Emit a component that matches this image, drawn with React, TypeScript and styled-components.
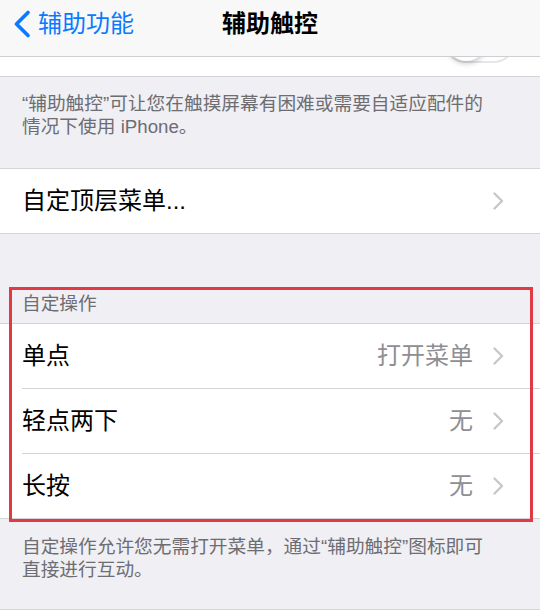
import React from 'react';
import styled, { createGlobalStyle } from 'styled-components';

const GlobalStyle = createGlobalStyle`
  html, body {
    margin: 0;
    padding: 0;
    background: #efeff4;
  }
  body {
    font-family: "Liberation Sans", "Noto Sans CJK SC", sans-serif;
    -webkit-font-smoothing: antialiased;
  }
`;

// Navigation bar
const NavBar = styled.header`
  height: 57px;
  box-sizing: border-box;
  padding-bottom: 9px;
  display: grid;
  grid-template-columns: 1fr auto 1fr;
  align-items: center;
  background: #f8f8f8;
  border-bottom: 1px solid #cfcfd3;
`;

const BackButton = styled.div`
  display: flex;
  align-items: center;
  gap: 7px;
  padding-left: 13px;
  color: #0a7aff;
  font-size: 24px;
  line-height: 30px;
`;

const Title = styled.div`
  font-size: 24px;
  line-height: 30px;
  font-weight: 700;
  color: #000;
`;

// Partially visible switch row under the nav bar
const SwitchRow = styled.div`
  height: 20px;
  box-sizing: border-box;
  overflow: hidden;
  background: #fff;
  border-bottom: 1px solid #d4d4d8;
  display: flex;
  justify-content: flex-end;
  align-items: flex-end;
  padding: 0 24px 13px 0;
`;

const SwitchTrack = styled.div`
  position: relative;
  flex: none;
  width: 73px;
  height: 45px;
  box-sizing: border-box;
  border-radius: 23px;
  border: 2px solid #e6e6ea;
  background: #fff;
`;

const SwitchKnob = styled.div`
  position: absolute;
  left: 1px;
  top: 0;
  width: 41px;
  height: 41px;
  border-radius: 50%;
  background: #fff;
  box-shadow: 0 3px 5px rgba(0, 0, 0, 0.18), 0 0 0 0.5px rgba(0, 0, 0, 0.08);
`;

const Footer = styled.div<{ $top: number; $bottom: number }>`
  padding: ${p => p.$top}px 22px ${p => p.$bottom}px;
  font-size: 18.7px;
  color: #6d6d72;
  white-space: nowrap;
`;

const FooterLine = styled.div`
  height: 23px;
  line-height: 23px;
`;

const Group = styled.section`
  background: #fff;
  border-top: 1px solid #d4d4d8;
  border-bottom: 1px solid #d4d4d8;
`;

const Row = styled.div`
  height: 64px;
  display: flex;
  align-items: center;
  padding-left: 22px;

  & + & {
    border-top: 1px solid #d4d4d8;
    margin-left: 22px;
    padding-left: 0;
  }
`;

const RowLabel = styled.span`
  flex: 1;
  font-size: 24px;
  line-height: 30px;
  color: #000;
`;

const RowValue = styled.span`
  font-size: 24px;
  line-height: 30px;
  color: #8e8e93;
  margin-right: 20px;
`;

const Chevron = styled.svg`
  flex: none;
  width: 11px;
  height: 18px;
  margin-right: 36px;
`;

const Highlight = styled.div`
  position: relative;
  margin-top: 53px;

  &::after {
    content: '';
    position: absolute;
    left: 9px;
    right: 7px;
    top: 0;
    bottom: -3px;
    border: 3px solid #e23a44;
    pointer-events: none;
  }
`;

const SectionHeader = styled.div`
  height: 36px;
  box-sizing: border-box;
  padding: 5px 22px 7px;
  font-size: 18.7px;
  line-height: 24px;
  color: #6d6d72;
`;

const ChevronIcon = () => (
  <Chevron viewBox="0 0 11 18">
    <path d="M1.5 1.5 L9 9 L1.5 16.5" fill="none" stroke="#c7c7cc" strokeWidth="2.4" strokeLinecap="round" strokeLinejoin="round" />
  </Chevron>
);

interface ItemProps {
  label: string;
  value?: string;
}

const Item: React.FC<ItemProps> = ({ label, value }) => (
  <Row>
    <RowLabel>{label}</RowLabel>
    {value && <RowValue>{value}</RowValue>}
    <ChevronIcon />
  </Row>
);

const actions = [
  { label: '单点', value: '打开菜单' },
  { label: '轻点两下', value: '无' },
  { label: '长按', value: '无' },
];

export default function App() {
  return (
    <>
      <GlobalStyle />
      <NavBar>
        <BackButton>
          <svg width="18" height="28" viewBox="0 0 18 28">
            <path d="M15 2.5 L3.5 14 L15 25.5" fill="none" stroke="#0a7aff" strokeWidth="3.6" strokeLinecap="round" strokeLinejoin="round" />
          </svg>
          辅助功能
        </BackButton>
        <Title>辅助触控</Title>
        <div />
      </NavBar>

      <SwitchRow>
        <SwitchTrack>
          <SwitchKnob />
        </SwitchTrack>
      </SwitchRow>

      <Footer $top={15} $bottom={30}>
        <FooterLine>“辅助触控”可让您在触摸屏幕有困难或需要自适应配件的</FooterLine>
        <FooterLine>情况下使用 iPhone。</FooterLine>
      </Footer>

      <Group>
        <Item label="自定顶层菜单..." />
      </Group>

      <Highlight>
        <SectionHeader>自定操作</SectionHeader>
        <Group>
          {actions.map(a => (
            <Item key={a.label} label={a.label} value={a.value} />
          ))}
        </Group>
      </Highlight>

      <Footer $top={16} $bottom={28}>
        <FooterLine>自定操作允许您无需打开菜单，通过“辅助触控”图标即可</FooterLine>
        <FooterLine>直接进行互动。</FooterLine>
      </Footer>

      <Group>
        <Row />
      </Group>
    </>
  );
}
